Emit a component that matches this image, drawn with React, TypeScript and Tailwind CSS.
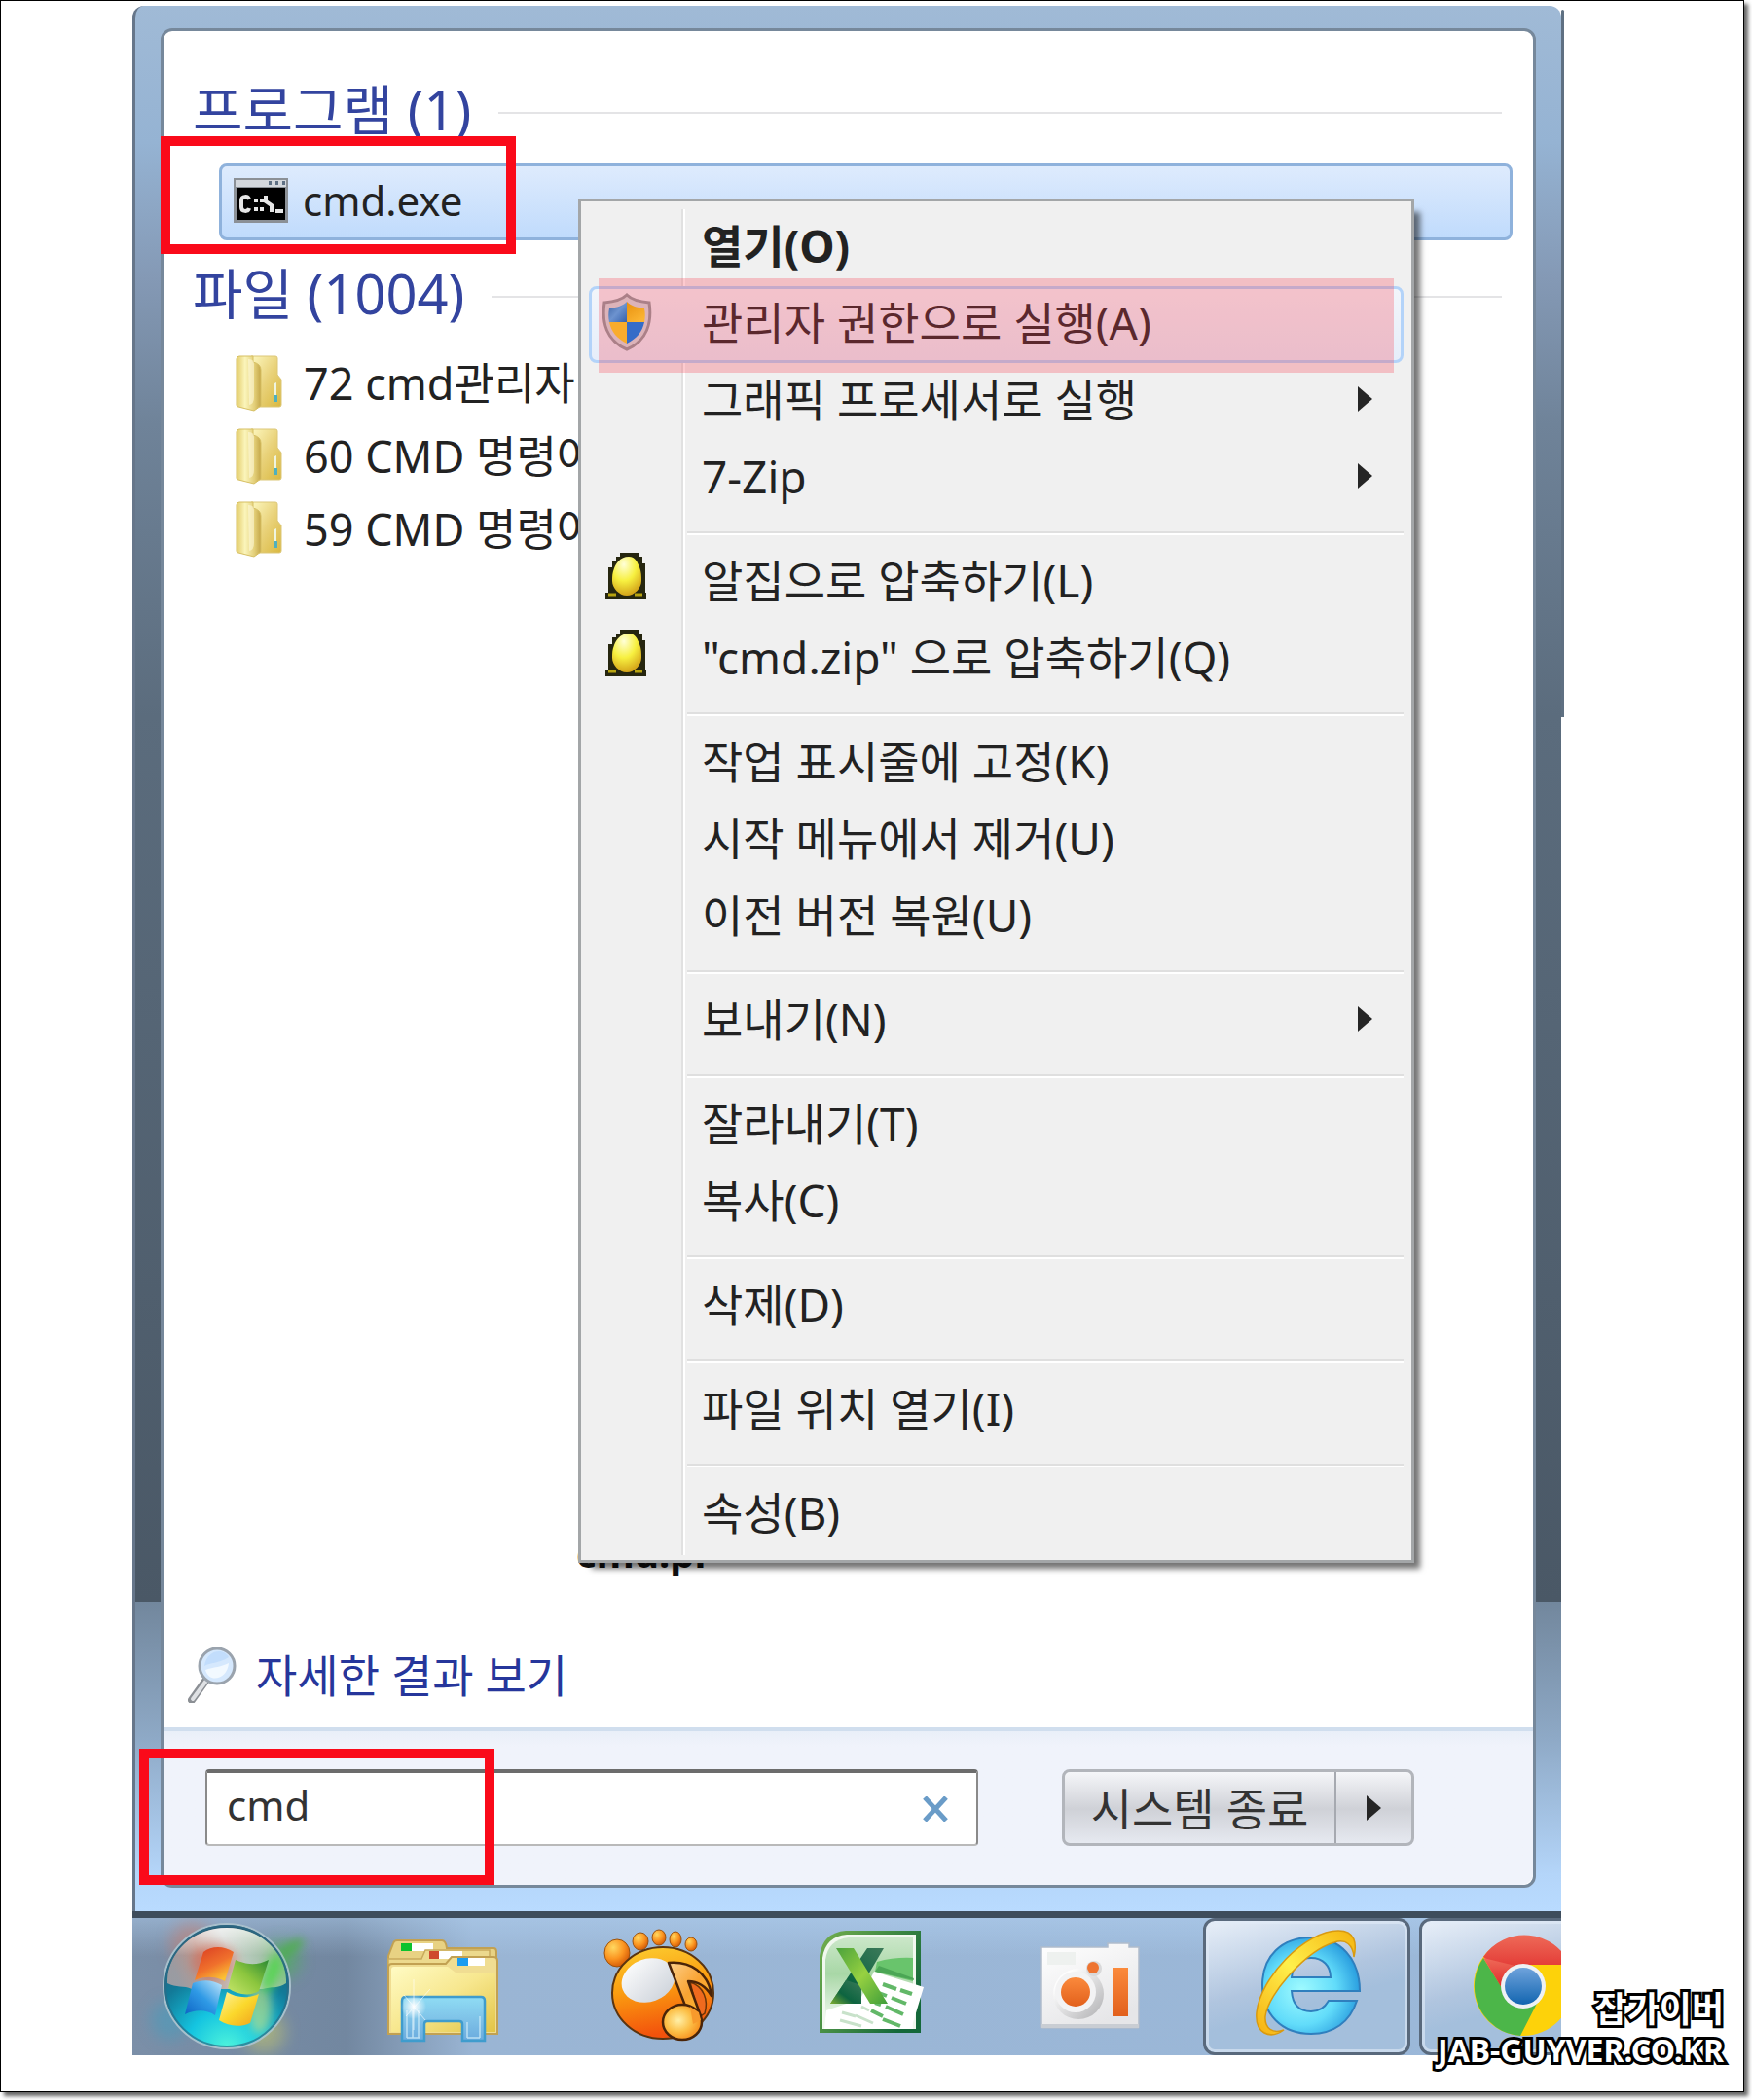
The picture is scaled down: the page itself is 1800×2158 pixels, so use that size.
import type { ReactNode } from "react";

type MenuEntry = {
  label: string;
  icon?: ReactNode;
  bold?: boolean;
  submenu?: boolean;
  active?: boolean;
};

function ConsoleIcon() {
  return (
    <svg viewBox="0 0 56 46" className="h-[46px] w-[56px] shrink-0" aria-hidden="true">
      <rect x="0" y="0" width="56" height="46" fill="#8b9096" />
      <rect x="2" y="2" width="52" height="7" fill="#d3d7dc" />
      <path d="M36 3h3v4h-3zM43 3h3v4h-3zM50 3h3v4h-3z" fill="#5e7084" />
      <rect x="3" y="10" width="50" height="33" fill="#000" />
      <path
        d="M16 22c-1-4-8-4-8 1v7c0 5 7 5 8 1M23 21v4M23 30v4M29 21v4M29 30v4M33 18v6l6 4v7M43 34h8"
        fill="none"
        stroke="#e6e6e6"
        strokeWidth="4"
      />
    </svg>
  );
}

function FolderIcon() {
  return (
    <svg viewBox="0 0 48 58" className="h-[58px] w-[48px] shrink-0" aria-hidden="true">
      <defs>
        <linearGradient id="folderBack" x1="0" y1="0" x2="1" y2="1">
          <stop offset="0" stopColor="#fdf8c0" />
          <stop offset="0.5" stopColor="#e9d27a" />
          <stop offset="1" stopColor="#d9b840" />
        </linearGradient>
        <linearGradient id="folderFront" x1="0" y1="0" x2="1" y2="0">
          <stop offset="0" stopColor="#e3cc6a" />
          <stop offset="0.35" stopColor="#fbf5bb" />
          <stop offset="0.75" stopColor="#e2cd76" />
          <stop offset="1" stopColor="#c4a74a" />
        </linearGradient>
      </defs>
      <path d="M16 1h25q2 0 2 2v17l4 5v26q0 2-2 2H24z" fill="url(#folderBack)" stroke="#dcc778" />
      <path d="M40 29l2-1v19h-2z" fill="#eef4e0" />
      <path d="M39 41h4v7h-4z" fill="#4fb0bd" />
      <path d="M1 4q0-3 3-3h14v6q8 2 8 8v37l-7 5L3 53q-2 0-2-2z" fill="url(#folderFront)" stroke="#d6bf63" />
      <path d="M13 4q6 0 6 5v34q0 7-5 8z" fill="#fffce0" opacity=".55" />
    </svg>
  );
}

function ShieldIcon() {
  return (
    <svg viewBox="0 0 52 60" className="h-[60px] w-[52px]" aria-hidden="true">
      <defs>
        <linearGradient id="shieldBlue" x1="0" y1="0" x2="1" y2="1">
          <stop offset="0" stopColor="#3a62a4" />
          <stop offset="0.5" stopColor="#6d93cf" />
          <stop offset="1" stopColor="#3560ac" />
        </linearGradient>
        <linearGradient id="shieldGold" x1="0" y1="0" x2="0.6" y2="1">
          <stop offset="0" stopColor="#e8900e" />
          <stop offset="1" stopColor="#fbb432" />
        </linearGradient>
      </defs>
      <path
        d="M26 2c4 4 12 7 23 8 3 20-2 39-23 48C5 49 0 30 3 10c11-1 19-4 23-8z"
        fill="#dcb3b9"
        stroke="#ab8088"
        strokeWidth="3"
      />
      <path d="M26 9v21H8c-1-5-1-9 0-14 8-1 14-3 18-7z" fill="url(#shieldBlue)" />
      <path d="M26 9v21h18c1-5 1-9 0-14-8-1-14-3-18-7z" fill="url(#shieldGold)" />
      <path d="M26 30v22C16 47 10 40 8 30z" fill="#f9ac2c" />
      <path d="M26 30v22c10-5 16-12 18-22z" fill="#356cc8" />
    </svg>
  );
}

function EggIcon() {
  return (
    <svg viewBox="0 0 44 56" className="h-[56px] w-[44px]" aria-hidden="true">
      <defs>
        <radialGradient id="egg" cx="0.4" cy="0.2" r="0.85">
          <stop offset="0" stopColor="#ffffd8" />
          <stop offset="0.5" stopColor="#f7f040" />
          <stop offset="1" stopColor="#cf9a14" />
        </radialGradient>
      </defs>
      <path d="M0 48v-7h3V15h4V8h4V4h4V0h19v4h4v7h3v30h1v7z" fill="#26260f" />
      <path d="M24 4c7 0 9 6 11 11 2 5 2 9 2 14 0 7-7 15-15 15S7 36 7 29c0-5 0-8 2-13s6-12 15-12z" fill="url(#egg)" />
      <path d="M3 43h8M30 43h8" stroke="#b8a410" strokeWidth="3" />
    </svg>
  );
}

function MagnifierIcon() {
  return (
    <svg viewBox="0 0 50 58" className="h-[58px] w-[50px] shrink-0" aria-hidden="true">
      <path d="M19 34L4 55" stroke="#8b8f94" strokeWidth="8" strokeLinecap="round" />
      <path d="M19 35L5 54" stroke="#dfe1e4" strokeWidth="4" strokeLinecap="round" />
      <ellipse cx="30" cy="20" rx="18" ry="18" fill="#d5e8fd" stroke="#9aa3ad" strokeWidth="3" />
      <path d="M17 20c6-4 14-2 25-9-4-9-22-9-25 9z" fill="#b9d9fb" opacity=".7" />
      <path d="M18 24c8-3 17-3 24-7-1 16-20 22-24 7z" fill="#f2f9ff" />
    </svg>
  );
}

function Triangle() {
  return (
    <svg viewBox="0 0 15 26" className="h-[26px] w-[15px] shrink-0" aria-hidden="true">
      <path d="M0 0l15 13L0 26z" fill="#252525" />
    </svg>
  );
}

function StartOrb() {
  return (
    <svg viewBox="0 0 160 140" className="h-[140px] w-[160px] overflow-visible" aria-hidden="true">
      <defs>
        <radialGradient id="orb" cx="0.5" cy="1" r="0.9">
          <stop offset="0" stopColor="#4ff5dc" />
          <stop offset="0.35" stopColor="#14c4e0" />
          <stop offset="0.7" stopColor="#127a98" />
          <stop offset="1" stopColor="#2a5f78" />
        </radialGradient>
        <linearGradient id="orbGloss" x1="0" y1="0.4" x2="1" y2="0.2">
          <stop offset="0" stopColor="#a8a0a4" />
          <stop offset="0.25" stopColor="#cf9a8c" />
          <stop offset="0.5" stopColor="#dcdcd6" />
          <stop offset="0.75" stopColor="#b4ccae" />
          <stop offset="1" stopColor="#7cc873" />
        </linearGradient>
        <linearGradient id="orbTop" x1="0" y1="0" x2="0" y2="1">
          <stop offset="0" stopColor="#fff" stopOpacity="0.7" />
          <stop offset="0.5" stopColor="#fff" stopOpacity="0" />
        </linearGradient>
        <linearGradient id="flagRed" x1="0" y1="0" x2="0.6" y2="1">
          <stop offset="0" stopColor="#d93a22" />
          <stop offset="0.6" stopColor="#f0702c" />
          <stop offset="1" stopColor="#fbc232" />
        </linearGradient>
        <linearGradient id="flagGreen" x1="0" y1="1" x2="1" y2="0">
          <stop offset="0" stopColor="#c7e66a" />
          <stop offset="0.5" stopColor="#8cc63e" />
          <stop offset="1" stopColor="#2b8a34" />
        </linearGradient>
        <linearGradient id="flagBlue" x1="0" y1="1" x2="1" y2="0">
          <stop offset="0" stopColor="#0d63c4" />
          <stop offset="0.5" stopColor="#2f9ae6" />
          <stop offset="1" stopColor="#c5e8fb" />
        </linearGradient>
        <linearGradient id="flagYellow" x1="0" y1="0" x2="1" y2="1">
          <stop offset="0" stopColor="#fdf3a0" />
          <stop offset="0.5" stopColor="#fbd82c" />
          <stop offset="1" stopColor="#f0a01c" />
        </linearGradient>
        <filter id="orbGlow" x="-0.5" y="-0.5" width="2" height="2">
          <feGaussianBlur stdDeviation="8" />
        </filter>
        <filter id="orbSoft" x="-1" y="-1" width="3" height="3">
          <feGaussianBlur stdDeviation="5" />
        </filter>
      </defs>
      <g filter="url(#orbGlow)" opacity=".5">
        <circle cx="44" cy="26" r="22" fill="#cf7a66" />
        <circle cx="136" cy="42" r="20" fill="#47b84e" />
        <circle cx="22" cy="104" r="20" fill="#3f9fc0" />
        <circle cx="118" cy="116" r="22" fill="#c6c76a" />
      </g>
      <ellipse cx="146" cy="30" rx="16" ry="5" transform="rotate(-35 146 30)" fill="#4fae50" filter="url(#orbSoft)" />
      <ellipse cx="80" cy="69" rx="65" ry="64" fill="url(#orb)" stroke="#a9c0cc" strokeWidth="2" />
      <ellipse cx="114" cy="92" rx="12" ry="26" fill="#cfe07a" opacity=".6" filter="url(#orbSoft)" />
      <path d="M19 66C18 34 46 9 80 9s62 25 61 57c-8 6-16 3-24 6H44c-8-4-16-1-25-6z" fill="url(#orbGloss)" opacity=".9" />
      <path d="M19 66C18 34 46 9 80 9s62 25 61 57z" fill="url(#orbTop)" />
      <ellipse cx="68" cy="44" rx="24" ry="18" fill="#e2573a" opacity=".4" filter="url(#orbSoft)" />
      <ellipse cx="126" cy="56" rx="8" ry="20" transform="rotate(20 126 56)" fill="#45d83c" opacity=".75" filter="url(#orbSoft)" />
      <ellipse cx="80" cy="69" rx="63" ry="62" fill="none" stroke="#2c6a84" strokeWidth="2" opacity=".7" />
      <path d="M56 34c8-6 20-7 31 0l-9 30c-9-5-20-6-31-1z" fill="url(#flagRed)" />
      <path d="M89 42c11 5 22 6 34 0l-10 32c-10 6-22 4-32-3z" fill="url(#flagGreen)" />
      <path d="M45 66c10-4 20-4 30 2l-7 31c-9-6-20-6-31-1z" fill="url(#flagBlue)" />
      <path d="M80 75c10 6 22 7 33 2l-9 30c-9 4-22 4-32-3z" fill="url(#flagYellow)" />
    </svg>
  );
}

function ExplorerIcon() {
  return (
    <svg viewBox="0 0 120 120" className="h-[120px] w-[120px]" aria-hidden="true">
      <defs>
        <linearGradient id="exBody" x1="0" y1="0" x2="1" y2="1">
          <stop offset="0" stopColor="#fffbc4" />
          <stop offset="0.5" stopColor="#f7e78e" />
          <stop offset="1" stopColor="#e3c445" />
        </linearGradient>
        <linearGradient id="exBlue" x1="0" y1="0" x2="0" y2="1">
          <stop offset="0" stopColor="#8fdcf4" />
          <stop offset="0.5" stopColor="#7fc3e8" />
          <stop offset="1" stopColor="#6aaade" />
        </linearGradient>
        <radialGradient id="exStar">
          <stop offset="0" stopColor="#fff" />
          <stop offset="1" stopColor="#fff" stopOpacity="0" />
        </radialGradient>
      </defs>
      <path d="M4 106V28l5-13q1-3 4-3h46q4 0 5 8h48q3 0 3 4v84H4z" fill="#e8d283" stroke="#c2a152" strokeWidth="2" />
      <path d="M17 15h11v8H17z" fill="#0cc22e" />
      <path d="M28 15h22v8H28z" fill="#fff" />
      <path d="M4 31h34l4-9h66v16H4z" fill="#ecd98d" stroke="#c9ab5c" strokeWidth="1.5" />
      <path d="M46 23h10v8H46z" fill="#cf4a2c" />
      <path d="M56 23h24v8H56z" fill="#fff" />
      <path d="M4 40q0-4 4-4h55l6-7h43q4 0 4 4v75H4z" fill="#f0dd92" stroke="#c2a152" strokeWidth="2" />
      <path d="M75 30h11v8H75z" fill="#1b9cf0" />
      <path d="M86 30h17v8H86z" fill="#fff" />
      <path d="M7 42q0-3 3-3h55l8 6h41v61H7z" fill="url(#exBody)" />
      <path d="M18 74q0-4 4-4h77q4 0 4 4v41H80V98q0-3-3-3H44q-3 0-3 3v17H18z" fill="url(#exBlue)" stroke="#3f9ccd" strokeWidth="2.5" />
      <path d="M23 112V84M29 112V84M35 112V84M85 112V96M98 112V90M23 112h13M85 112h13" stroke="#cdebf9" strokeWidth="1.5" opacity=".8" />
      <path d="M30 52v52M47 62L22 90M20 68l22 26" stroke="#fff" strokeWidth="1" opacity=".6" />
      <circle cx="30" cy="80" r="13" fill="url(#exStar)" />
    </svg>
  );
}

function FootIcon() {
  return (
    <svg viewBox="0 0 120 120" className="h-[120px] w-[120px]" aria-hidden="true">
      <defs>
        <linearGradient id="footBody" x1="0" y1="0" x2="0.2" y2="1">
          <stop offset="0" stopColor="#fcd032" />
          <stop offset="0.5" stopColor="#fb9c10" />
          <stop offset="1" stopColor="#f2520c" />
        </linearGradient>
        <radialGradient id="footToe" cx="0.35" cy="0.3" r="0.7">
          <stop offset="0" stopColor="#ffd860" />
          <stop offset="0.6" stopColor="#fb9420" />
          <stop offset="1" stopColor="#d8600a" />
        </radialGradient>
        <linearGradient id="footShine" x1="0" y1="0" x2="0.6" y2="1">
          <stop offset="0" stopColor="#fff" />
          <stop offset="1" stopColor="#d2d7de" />
        </linearGradient>
        <linearGradient id="footNote" x1="0" y1="0" x2="1" y2="1">
          <stop offset="0" stopColor="#fdd08a" />
          <stop offset="0.5" stopColor="#f9a332" />
          <stop offset="1" stopColor="#fbc02c" />
        </linearGradient>
        <radialGradient id="footHead" cx="0.4" cy="0.45" r="0.65">
          <stop offset="0" stopColor="#fff0a8" />
          <stop offset="0.5" stopColor="#fcc048" />
          <stop offset="1" stopColor="#f58414" />
        </radialGradient>
      </defs>
      <ellipse cx="17" cy="25" rx="13" ry="14" fill="url(#footToe)" stroke="#9a520e" />
      <ellipse cx="41" cy="13" rx="8" ry="9" fill="url(#footToe)" stroke="#9a520e" />
      <ellipse cx="60" cy="9" rx="7" ry="8" fill="url(#footToe)" stroke="#9a520e" />
      <ellipse cx="77" cy="11" rx="6" ry="8" fill="url(#footToe)" stroke="#9a520e" />
      <ellipse cx="93" cy="16" rx="6" ry="7" fill="url(#footToe)" stroke="#9a520e" />
      <ellipse cx="64" cy="66" rx="52" ry="47" fill="url(#footBody)" stroke="#5a3410" strokeWidth="2" />
      <ellipse cx="49" cy="53" rx="28" ry="22" transform="rotate(-20 49 53)" fill="url(#footShine)" />
      <path d="M92 55c14 4 19 18 15 32l-6 4z" fill="#ef6a1e" stroke="#6b3408" strokeWidth="1.5" />
      <path
        d="M70 35c22-2 41 10 44 34-6-10-14-15-24-15l13 36-11 2z"
        fill="url(#footNote)"
        stroke="#4a2408"
        strokeWidth="2.5"
        strokeLinejoin="round"
      />
      <ellipse cx="84" cy="96" rx="20" ry="18" fill="url(#footHead)" stroke="#4a2408" strokeWidth="2.5" />
      <path d="M92 80l9 6 2 8-8 4z" fill="#f79a2c" />
    </svg>
  );
}

function SpreadsheetIcon() {
  return (
    <svg viewBox="0 0 120 120" className="h-[120px] w-[120px]" aria-hidden="true">
      <defs>
        <linearGradient id="xlFrame" x1="0" y1="0" x2="1" y2="0.6">
          <stop offset="0" stopColor="#74b04e" />
          <stop offset="1" stopColor="#14683a" />
        </linearGradient>
        <linearGradient id="xlFill" x1="0" y1="0" x2="0" y2="1">
          <stop offset="0" stopColor="#cbe7c9" />
          <stop offset="0.4" stopColor="#a8d7a6" />
          <stop offset="1" stopColor="#fff" />
        </linearGradient>
        <linearGradient id="xlDark" x1="0" y1="1" x2="1" y2="0">
          <stop offset="0" stopColor="#7fae32" />
          <stop offset="0.4" stopColor="#0d6440" />
          <stop offset="1" stopColor="#3c7a5a" />
        </linearGradient>
        <linearGradient id="xlLight" x1="0" y1="0" x2="1" y2="1">
          <stop offset="0" stopColor="#4ba23c" />
          <stop offset="0.5" stopColor="#97d141" />
          <stop offset="1" stopColor="#3f9e3a" />
        </linearGradient>
      </defs>
      <path d="M3 107V28Q6 4 30 2h77v105z" fill="url(#xlFrame)" />
      <path d="M6 103V30Q9 8 31 6h71v97z" fill="#f1f8ef" />
      <path d="M9 88V32Q12 11 33 9h66v94H9z" fill="url(#xlFill)" />
      <path d="M62 34q18-5 37-4v24L60 44z" fill="#69c46c" />
      <path d="M60 44l40 9v-2L64 38z" fill="#3f9a4c" opacity=".7" />
      <path d="M52 20h17L46 59v18H14z" fill="url(#xlDark)" />
      <path d="M10 84l35-12 14-28 51 16-12 40-4 3H8z" fill="#fff" />
      <path
        d="M68 57l14 5M86 63l12 4M64 66l8 3M77 71l15 6M60 76l6 2M71 80l18 8M56 84l12 6M68 93l18 7"
        stroke="#62b868"
        strokeWidth="4"
      />
      <path d="M46 80l8 4M40 89l18 8M26 86l14 4M24 94l22 6" stroke="#c8e2ca" strokeWidth="3" />
      <path d="M14 77l16-24 16 5v19z" fill="url(#xlDark)" />
      <path d="M20 20h18l35 57H55z" fill="url(#xlLight)" />
    </svg>
  );
}

function CameraIcon() {
  return (
    <svg viewBox="0 0 120 120" className="h-[120px] w-[120px]" aria-hidden="true">
      <defs>
        <linearGradient id="camBody" x1="0" y1="0" x2="0.5" y2="1">
          <stop offset="0" stopColor="#fff" />
          <stop offset="1" stopColor="#e6e6e8" />
        </linearGradient>
        <linearGradient id="camRing" x1="0.2" y1="0.2" x2="0.9" y2="0.9">
          <stop offset="0" stopColor="#fdfdfd" />
          <stop offset="1" stopColor="#b9b9bb" />
        </linearGradient>
        <linearGradient id="camOrange" x1="0" y1="0" x2="0" y2="1">
          <stop offset="0" stopColor="#fb8a3c" />
          <stop offset="1" stopColor="#e2601c" />
        </linearGradient>
      </defs>
      <path d="M9 19h68v-4h22v4h10v82q0 1-1 1H10q-1 0-1-1z" fill="url(#camBody)" stroke="#b0bccb" strokeWidth="1.5" />
      <path d="M9 98h100v4H9z" fill="#c9cdd3" />
      <path d="M15 24h29v13H15z" fill="#eef1ef" />
      <circle cx="47" cy="67" r="26" fill="url(#camRing)" />
      <circle cx="44" cy="65" r="21" fill="#f3f3f4" />
      <circle cx="44" cy="65" r="15" fill="url(#camOrange)" />
      <circle cx="63" cy="41" r="8" fill="#d9d9da" />
      <circle cx="62" cy="40" r="6" fill="#ee7431" />
      <path d="M83 40h15v50H83z" fill="url(#camOrange)" />
    </svg>
  );
}

function BrowserEIcon() {
  return (
    <svg viewBox="0 0 120 120" className="h-[120px] w-[120px]" aria-hidden="true">
      <defs>
        <radialGradient id="ieBlue" cx="0.4" cy="0.55" r="0.65">
          <stop offset="0" stopColor="#a0fbff" />
          <stop offset="0.55" stopColor="#62dcfa" />
          <stop offset="1" stopColor="#1f92da" />
        </radialGradient>
        <linearGradient id="ieGold" x1="0" y1="1" x2="1" y2="0">
          <stop offset="0" stopColor="#f6b010" />
          <stop offset="0.5" stopColor="#fff04c" />
          <stop offset="1" stopColor="#f5b40e" />
        </linearGradient>
      </defs>
      <path
        d="M64 9c30 0 50 22 50 55H44c1 14 8 21 20 21 9 0 14-4 18-11h29c-7 22-24 34-47 34-30 0-50-20-50-50S34 9 64 9zM44 50h40c0-12-8-20-20-20s-19 8-20 20z"
        fill="url(#ieBlue)"
        stroke="#2f7fbe"
        strokeWidth="2"
        fillRule="evenodd"
      />
      <path
        d="M36 104C22 114 6 108 8 86 12 50 58 2 92 2c18 0 19 14 16 27-1-12-8-19-20-15C60 22 20 66 17 90c-1 13 8 18 19 14z"
        fill="url(#ieGold)"
        stroke="#d99a10"
        strokeWidth="1.5"
      />
    </svg>
  );
}

function ChromeIcon() {
  return (
    <svg viewBox="0 0 120 120" className="h-[120px] w-[120px] shrink-0" aria-hidden="true">
      <defs>
        <linearGradient id="chRed" x1="0" y1="0" x2="0" y2="1">
          <stop offset="0" stopColor="#ee6a58" />
          <stop offset="1" stopColor="#dd1f22" />
        </linearGradient>
        <linearGradient id="chBlue" x1="0" y1="0" x2="0" y2="1">
          <stop offset="0" stopColor="#6fa3dc" />
          <stop offset="1" stopColor="#1265b0" />
        </linearGradient>
      </defs>
      <circle cx="60" cy="59" r="51" fill="#fdd20a" />
      <path d="M60 59L19 29A51 51 0 0 1 108 37H60z" fill="url(#chRed)" />
      <path d="M19 30A51 51 0 0 0 57 110l20-39-17-12-20 5z" fill="#4cb649" />
      <path d="M19 30l22 36 19-7V40z" fill="url(#chRed)" />
      <circle cx="60" cy="59" r="23" fill="#eef1f4" />
      <circle cx="60" cy="59" r="19" fill="url(#chBlue)" />
    </svg>
  );
}

const menuGroups: MenuEntry[][] = [
  [
    { label: "열기(O)", bold: true },
    { label: "관리자 권한으로 실행(A)", icon: <ShieldIcon />, active: true },
    { label: "그래픽 프로세서로 실행", submenu: true },
    { label: "7-Zip", submenu: true },
  ],
  [
    { label: "알집으로 압축하기(L)", icon: <EggIcon /> },
    { label: '"cmd.zip" 으로 압축하기(Q)', icon: <EggIcon /> },
  ],
  [{ label: "작업 표시줄에 고정(K)" }, { label: "시작 메뉴에서 제거(U)" }, { label: "이전 버전 복원(U)" }],
  [{ label: "보내기(N)", submenu: true }],
  [{ label: "잘라내기(T)" }, { label: "복사(C)" }],
  [{ label: "삭제(D)" }],
  [{ label: "파일 위치 열기(I)" }],
  [{ label: "속성(B)" }],
];

function MenuRow({ entry }: { entry: MenuEntry }) {
  return (
    <li className="relative">
      <button
        type="button"
        role="menuitem"
        className={
          entry.active
            ? "flex h-[79px] w-full items-center rounded-lg border-3 border-[#b3d3f9] bg-linear-to-b from-[#f2f5fa] to-[#e6eefa] pr-[29px] pb-[6px] text-left"
            : "flex h-[79px] w-full items-center border-3 border-transparent pr-[29px] pb-[6px] text-left"
        }
      >
        <span className="relative z-10 flex w-[72px] shrink-0 justify-center">{entry.icon}</span>
        <span
          className={
            entry.bold
              ? "ml-[41px] flex-1 text-[46px] leading-[60px] font-bold whitespace-nowrap"
              : "ml-[41px] flex-1 text-[46px] leading-[60px] whitespace-nowrap"
          }
        >
          {entry.label}
        </span>
        {entry.submenu && <Triangle />}
      </button>
      {entry.active && (
        <span className="pointer-events-none absolute -top-2 right-[10px] -bottom-[10px] left-[10px] bg-[#f83b4e]/27" />
      )}
    </li>
  );
}

function ContextMenu() {
  return (
    <div className="absolute top-[198px] right-[151px] left-[455px] border-3 border-[#a3a6a8] bg-[#f0f0f0] px-2 pt-2 pb-[7px] text-[#222] shadow-[10px_10px_6px_-4px_rgba(0,0,0,0.55)]">
      <div className="absolute top-2 bottom-[5px] left-[103px] w-1 border-r-2 border-l-2 border-l-[#e1e1e1] border-r-white" />
      <ul role="menu" className="relative">
        {menuGroups.map((group, index) => (
          <li key={index} role="none">
            {index > 0 && (
              <div className="flex h-[28px] flex-col pt-[15px] pl-[101px]">
                <hr className="h-1 border-t-2 border-b-2 border-t-[#dfdfdf] border-b-white" />
              </div>
            )}
            <ul role="group">
              {group.map((entry) => (
                <MenuRow key={entry.label} entry={entry} />
              ))}
            </ul>
          </li>
        ))}
      </ul>
    </div>
  );
}

function SectionHeading({ children }: { children: ReactNode }) {
  return (
    <h2 className="mr-[32px] ml-[30px] flex h-[80px] items-center gap-[28px] text-[56px] leading-[72px] whitespace-nowrap text-[#33449f]">
      <span className="pb-2">{children}</span>
      <span className="h-[2px] flex-1 bg-[#e4e4e6]" />
    </h2>
  );
}

const files = ["72 cmd관리자", "60 CMD 명령어", "59 CMD 명령어"];

function Results() {
  return (
    <section className="flex min-h-[1743px] flex-col pt-[44px] pb-[24px]">
      <SectionHeading>프로그램 (1)</SectionHeading>
      <div className="relative mt-3 mr-[21px] ml-[57px]">
        <button
          type="button"
          className="flex h-[79px] w-full items-center rounded-lg border-3 border-[#8fb2dc] bg-linear-to-b from-[#deebfd] to-[#c0dbfc] pb-1 pl-3 text-left text-[42px] leading-[60px] text-[#222]"
        >
          <ConsoleIcon />
          <span className="ml-[15px]">cmd.exe</span>
        </button>
        <span className="pointer-events-none absolute -top-[28px] -left-[60px] h-[121px] w-[365px] border-[10px] border-[#fa0a1a]" />
      </div>
      <div className="mt-[18px]">
        <SectionHeading>파일 (1004)</SectionHeading>
      </div>
      <ul className="mt-[11px] ml-[74px] text-[45px] leading-[60px] text-[#222]">
        {files.map((file) => (
          <li key={file} className="flex h-[75px] items-center gap-[22px] whitespace-nowrap">
            <FolderIcon />
            <span>{file}</span>
          </li>
        ))}
      </ul>
      <p className="mt-auto mb-[60px] ml-[424px] h-[70px] text-[40px] leading-[70px] font-bold text-[#111]">cmd.pl</p>
      <a href="#results" className="ml-[25px] flex items-center gap-5 text-[46px] leading-[60px] text-[#26369b]">
        <MagnifierIcon />
        자세한 결과 보기
      </a>
    </section>
  );
}

function SearchBar() {
  return (
    <section className="flex rounded-b-xl border-t-4 border-[#d0deee] bg-linear-to-b from-[#e9eff8] from-0% to-[#f0f3fb] to-10% pt-[39px] pr-[122px] pb-[40px] pl-[43px]">
      <form className="relative flex h-[79px] min-w-0 flex-1 items-center rounded border-2 border-t-4 border-[#8a8a8a] border-t-[#6c6c6c] border-b-[#b9b9b9] bg-white">
        <input
          aria-label="검색"
          type="text"
          defaultValue="cmd"
          className="h-[70px] min-w-0 flex-1 bg-transparent pb-2 pl-[20px] text-[42px] leading-[60px] text-[#333] outline-none"
        />
        <button type="button" aria-label="지우기" className="mr-[29px] shrink-0">
          <svg viewBox="0 0 26 26" className="h-[26px] w-[26px]" aria-hidden="true">
            <path d="M2 1l22 24M24 1L2 25" stroke="#6a9cc8" strokeWidth="5" />
          </svg>
        </button>
        <span className="pointer-events-none absolute -top-[25px] -left-[70px] h-[140px] w-[365px] border-[10px] border-[#fa0a1a]" />
      </form>
      <div className="ml-[86px] flex h-[79px] shrink-0 rounded-lg border-3 border-[#b2b5bb] bg-linear-to-b from-[#f5f6f9] from-0% via-[#cfd1d7] via-52% to-[#e6e9f0] to-100% text-[46px] text-[#333]">
        <button type="button" className="w-[277px] leading-[60px] whitespace-nowrap">
          시스템 종료
        </button>
        <button type="button" aria-label="종료 옵션" className="flex w-[79px] items-center justify-center border-l-2 border-[#a6a9b0]">
          <Triangle />
        </button>
      </div>
    </section>
  );
}

const pinned = [
  { name: "탐색기", icon: <ExplorerIcon /> },
  { name: "곰오디오", icon: <FootIcon /> },
  { name: "엑셀", icon: <SpreadsheetIcon /> },
  { name: "캡처", icon: <CameraIcon /> },
];

function Taskbar() {
  return (
    <nav
      aria-label="작업 표시줄"
      className="flex h-[141px] items-stretch overflow-hidden bg-[linear-gradient(to_bottom,rgba(180,212,245,0.45),rgba(150,180,210,0)_28%),linear-gradient(to_right,#7b8fa8_0px,#7287a0_220px,#8299b4_270px,#9ab5d4_350px,#9bb8d9_100%)]"
    >
      <button type="button" aria-label="시작" className="flex w-[208px] shrink-0 items-center justify-center pr-[15px]">
        <StartOrb />
      </button>
      {pinned.map((app) => (
        <button key={app.name} type="button" aria-label={app.name} className="flex w-[222px] shrink-0 items-center justify-center">
          {app.icon}
        </button>
      ))}
      <button
        type="button"
        aria-label="인터넷 익스플로러"
        className="ml-1 flex w-[213px] shrink-0 items-center justify-center rounded-xl border-3 border-[#59697c] bg-linear-165 from-[#e8eff8] from-0% via-[#b0c5df] via-45% to-[#a4bfdc] to-60% shadow-[inset_0_0_0_3px_rgba(225,235,247,0.6)]"
      >
        <BrowserEIcon />
      </button>
      <button
        type="button"
        aria-label="크롬"
        className="ml-[9px] flex w-[213px] shrink-0 items-center justify-center rounded-xl border-3 border-[#59697c] bg-linear-165 from-[#e8eff8] from-0% via-[#b0c5df] via-45% to-[#a4bfdc] to-60% shadow-[inset_0_0_0_3px_rgba(225,235,247,0.6)]"
      >
        <ChromeIcon />
      </button>
    </nav>
  );
}

export default function App() {
  return (
    <div className="bg-white pr-2 pb-2 font-['Noto_Sans','Noto_Sans_CJK_KR',sans-serif]">
      <main className="relative border border-black bg-white pt-[5px] pr-[187px] pb-[37px] pl-[135px] shadow-[4px_4px_4px_rgba(0,0,0,0.6)]">
        <div className="relative rounded-t-xl border-l-3 border-[#66768a] bg-[linear-gradient(to_bottom,#a0bad6_0px,#95b3d3_140px,#8499b5_280px,#6f8399_430px,#5b6c7d_730px,#4a5866_1640px,#72879d_1640px,#8ea9c6_1780px,#b4d5f9_1920px,#b9dbff_100%)] pt-[23px] pr-[26px] pb-[24px] pl-[26px]">
          <div className="absolute top-1 -right-[3px] h-[727px] w-[3px] rounded-t bg-[#5f7082]" />
          <div className="rounded-xl border-3 border-[#76889b] bg-white">
            <Results />
            <SearchBar />
          </div>
          <ContextMenu />
        </div>
        <div className="h-[7px] bg-[#3e4d5c]" />
        <Taskbar />
        <div className="absolute right-[20px] bottom-[22px] text-right font-bold text-white [-webkit-text-stroke:6px_#000] [paint-order:stroke_fill]">
          <p className="text-[36px] leading-[44px]">잡가이버</p>
          <p className="text-[32px] leading-[40px]">JAB-GUYVER.CO.KR</p>
        </div>
      </main>
    </div>
  );
}
